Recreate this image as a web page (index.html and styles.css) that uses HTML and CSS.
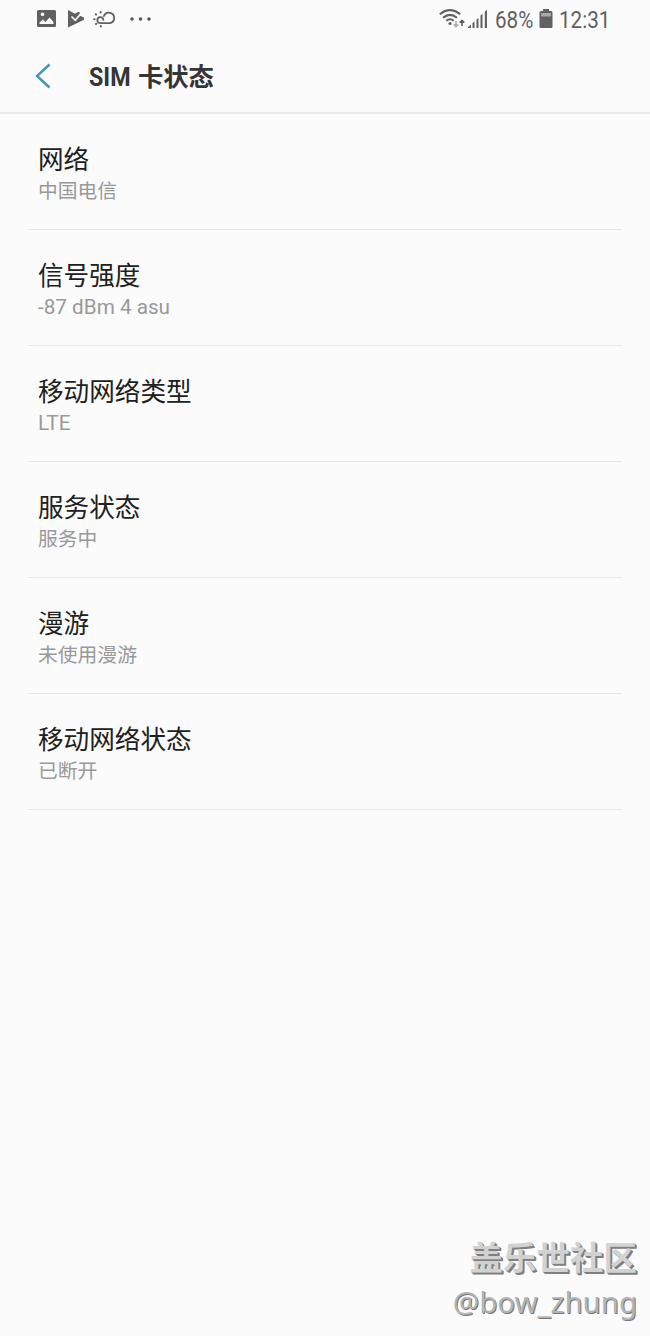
FILE: index.html
```html
<!DOCTYPE html>
<html lang="zh-CN">
<head>
<meta charset="utf-8">
<title>SIM 卡状态</title>
<link rel="stylesheet" href="styles.css">
</head>
<body>
<div class="status_bar">
    <svg class="notify" width="122" height="24" viewBox="0 0 122 24">
        <!-- gallery -->
        <path fill="#616161" fill-rule="evenodd" d="M1.500 2h16q1.500 0 1.500 1.500v14q0 1.500-1.500 1.500h-16Q0 19 0 17.500v-14Q0 2 1.500 2zM2.500 16h14v-2l-4-4.500-4 4.500-2.500-2.500L2.500 14.500zM5.500 4.500a1.800 1.800 0 1 0 .01 0z"/>
        <!-- play store -->
        <path fill="#616161" d="M31 2l7 3.800 3.500-2 1.800 1.200-1.500 2.300L47 9.500v2.200L31 19.500z"/>
        <path fill="none" stroke="#fbfbfb" stroke-width="1.700" d="M34.500 8.500l3.700 3.800L44 5.500"/>
        <!-- weather -->
        <path fill="none" stroke="#616161" stroke-width="1.800" stroke-linecap="round" d="M66.300 11.800a3 3 0 1 0-3 3.400h9.200a5.300 5.300 0 1 0-5.600-7.200"/>
        <path fill="none" stroke="#616161" stroke-width="2" stroke-linecap="round" d="M57.200 11.200h.4M58.800 6.300l.3.300M63.600 4v.4M59 16l.3-.3M63.800 18v.4"/>
        <g fill="#555"><circle cx="95" cy="11" r="1.800"/><circle cx="103.500" cy="11" r="1.800"/><circle cx="112" cy="11" r="1.800"/></g>
    </svg>
    <div class="system">
        <svg class="signal" width="50" height="24" viewBox="0 0 50 24">
            <g fill="none" stroke="#616161" stroke-width="2">
                <path d="M.8 6.300Q11-2 21.200 6.300M4 9.800Q11 4 18 9.800M7.200 12.800Q11 9.800 14.800 12.800"/>
            </g>
            <circle cx="11" cy="15.500" r="1.600" fill="#616161"/>
            <path fill="none" stroke="#aaa" stroke-width="1.600" d="M17 13v5.500M14.900 16.300l2.100 2.200 2.100-2.200"/>
            <path fill="none" stroke="#555" stroke-width="1.600" d="M23 18v-5.500M20.700 14.700l2.300-2.200 2.300 2.200"/>
            <path fill="#616161" d="M29 20v-1l3-2.500V20zM33.500 20v-5l2-1.500V20zM37.500 20v-8.500l2-1.500V20zM41.500 20V7.500l2-1.800V20zM45.800 20V3.800l2.200-2V20z"/>
        </svg>
        <span class="percent">68%</span>
        <svg class="battery" width="14" height="20" viewBox="0 0 14 20">
            <path fill="#616161" d="M4 0h6v2h2q1.500 0 1.500 1.500V18q0 1-1 1h-11q-1 0-1-1V3.500Q.5 2 2 2h2z"/>
            <path fill="#a9a9a9" d="M2 4h10v3.500H2z"/>
        </svg>
        <span class="clock">12:31</span>
    </div>
</div>
<div class="header">
    <svg class="back" width="18" height="28" viewBox="0 0 18 28">
        <path fill="none" stroke="#4495b3" stroke-width="2.400" d="M14.500 2.500L2 14l12.500 11.500"/>
    </svg>
    <h1 class="title"><span class="sim">SIM</span>卡状态</h1>
</div>
<div class="list">
    <div class="item">
        <div class="name">网络</div>
        <div class="value">中国电信</div>
    </div>
    <div class="item">
        <div class="name">信号强度</div>
        <div class="value latin">-87 dBm 4 asu</div>
    </div>
    <div class="item">
        <div class="name">移动网络类型</div>
        <div class="value latin">LTE</div>
    </div>
    <div class="item">
        <div class="name">服务状态</div>
        <div class="value">服务中</div>
    </div>
    <div class="item">
        <div class="name">漫游</div>
        <div class="value">未使用漫游</div>
    </div>
    <div class="item">
        <div class="name">移动网络状态</div>
        <div class="value">已断开</div>
    </div>
</div>
<div class="watermark">
    <div class="site">盖乐世社区</div>
    <div class="user">@bow_zhung</div>
</div>
</body>
</html>
```
FILE: styles.css
```css
* {
    box-sizing: border-box;
}
body {
    position: relative;
    height: 1336px;
    margin: 0;
    background-color: #fbfbfb;
    font-family: Roboto, "Noto Sans CJK SC", sans-serif;
    overflow: hidden;
}
.status_bar {
    display: flex;
    justify-content: space-between;
    height: 40px;
    padding: 8px 38px 0 37px;
}
.system {
    display: flex;
    color: #616161;
    font-size: 24px;
    line-height: 24px;
}
.signal {
    margin-right: 6px;
}
.percent, .clock {
    transform: scaleX(0.86);
    transform-origin: left;
    white-space: nowrap;
}
.percent {
    width: 44px;
}
.battery {
    margin: 1px 6px 0 0;
}
.clock {
    width: 53px;
}
.header {
    display: flex;
    align-items: center;
    height: 74px;
    padding-left: 35px;
    border-bottom: 2px solid #ebebeb;
}
.title {
    display: flex;
    margin: 3px 0 0 36px;
    color: #353535;
    font-size: 25.3px;
    line-height: 36px;
    font-weight: bold;
}
.sim {
    width: 49px;
    transform: scaleX(0.92);
    transform-origin: left;
}
.list {
    padding: 0 28px;
}
.item {
    height: 116px;
    padding: 28px 10px 0;
    border-bottom: 1px solid #e7e7e7;
}
.name {
    color: #202020;
    font-size: 25.6px;
    line-height: 36px;
}
.value {
    color: #999;
    font-size: 19.8px;
    line-height: 28px;
}
.latin {
    font-size: 20.7px;
    line-height: 26px;
}
.watermark {
    position: absolute;
    right: 13px;
    bottom: 13px;
    text-align: right;
    white-space: nowrap;
}
.site {
    color: #d2d2d2;
    font-size: 33.5px;
    line-height: 44px;
    font-weight: bold;
    text-shadow: 1px 1px 0 #808080, 2px 2px 0 #808080;
}
.user {
    color: #b4b4b4;
    font-family: "Noto Sans", sans-serif;
    font-size: 29.4px;
    line-height: 42px;
    text-shadow: 1px 1px 0 #777;
}
```
